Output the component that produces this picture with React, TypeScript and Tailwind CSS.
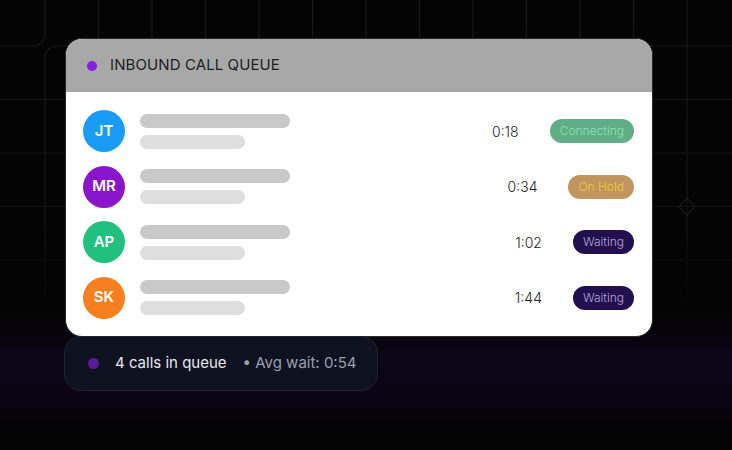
import React from 'react';

type Call = {
  initials: string;
  color: string;
  time: string;
  status: 'Connecting' | 'On Hold' | 'Waiting';
};

const calls: Call[] = [
  { initials: 'JT', color: 'bg-[#1a9bf5]', time: '0:18', status: 'Connecting' },
  { initials: 'MR', color: 'bg-[#8a16cc]', time: '0:34', status: 'On Hold' },
  { initials: 'AP', color: 'bg-[#22c07f]', time: '1:02', status: 'Waiting' },
  { initials: 'SK', color: 'bg-[#f77f1e]', time: '1:44', status: 'Waiting' },
];

const badgeStyles: Record<Call['status'], string> = {
  Connecting: 'bg-[#5fae86] text-[#93e2b6]',
  'On Hold': 'bg-[#c0955e] text-[#f6c93c]',
  Waiting: 'bg-[#22104e] text-[#b7a5df]',
};

function GridBackground() {
  const xs = Array.from({ length: 13 }, (_, i) => 98.5 + i * 53.5);
  const ys = [99.5, 153, 206.5, 260, 313.5];
  return (
    <svg className="absolute inset-0 h-full w-full" width="732" height="450" viewBox="0 0 732 450">
      <defs>
        <linearGradient id="fade" x1="0" y1="0" x2="0" y2="1">
          <stop offset="0" stopColor="#fff" stopOpacity="1" />
          <stop offset="0.5" stopColor="#fff" stopOpacity="0.8" />
          <stop offset="0.7" stopColor="#fff" stopOpacity="0" />
        </linearGradient>
        <mask id="gridMask">
          <rect width="732" height="450" fill="url(#fade)" />
        </mask>
        <linearGradient id="band" x1="0" y1="0" x2="0" y2="1">
          <stop offset="0" stopColor="#0b0416" stopOpacity="0" />
          <stop offset="0.35" stopColor="#0d0519" stopOpacity="1" />
          <stop offset="0.7" stopColor="#0a0413" stopOpacity="1" />
          <stop offset="1" stopColor="#050208" stopOpacity="0" />
        </linearGradient>
      </defs>
      <rect x="0" y="315" width="732" height="125" fill="url(#band)" />
      <g mask="url(#gridMask)" stroke="#191919" strokeWidth="1.2" fill="none">
        {xs.map((x) => (
          <line key={`v${x}`} x1={x} y1="0" x2={x} y2="450" />
        ))}
        {ys.map((y) => (
          <line key={`h${y}`} x1="0" y1={y} x2="732" y2={y} />
        ))}
        {/* rounded cell corners near top-left */}
        <path d="M45 0 V34 A12 12 0 0 1 33 46 H0" />
        <path d="M732 46 H57 A12 12 0 0 0 45 58 V450" />
        {/* little diamond at an intersection */}
        <path d="M687 198 L695 206.5 L687 215 L679 206.5 Z" stroke="#1e1e1e" />
      </g>
    </svg>
  );
}

export default function App() {
  return (
    <div
      className="relative h-[450px] w-[732px] overflow-hidden bg-[#040404]"
      style={{ fontFamily: 'Inter, "Noto Sans", sans-serif' }}
    >
      <GridBackground />
      <div className="relative flex flex-col pt-[38px] pl-[64px]">
        <div className="ml-[1px] w-[588px] overflow-hidden rounded-[17px] border-[1.5px] border-[#2a2a2a] bg-white">
          <div className="flex h-[53px] items-center gap-[13px] bg-[#a8a8a8] pl-[21px]">
            <span className="h-[10px] w-[10px] rounded-full bg-[#8a1ee0]" />
            <span className="text-[15px] tracking-[0.1px] text-[#1e1e1e]">INBOUND CALL QUEUE</span>
          </div>
          <div className="flex flex-col gap-[13.5px] pt-[18px] pr-[18px] pb-[17px] pl-[17px]">
            {calls.map((c) => (
              <div key={c.initials} className="flex h-[42px] items-center">
                <div
                  className={`flex h-[42px] w-[42px] shrink-0 items-center justify-center rounded-full ${c.color} text-[15px] font-semibold text-white`}
                >
                  {c.initials}
                </div>
                <div className="ml-[15px] flex flex-col gap-[7px]">
                  <div className="h-[14px] w-[150px] rounded-full bg-[#c9c9c9]" />
                  <div className="h-[14px] w-[105px] rounded-full bg-[#dedede]" />
                </div>
                <div className="ml-auto flex items-center gap-[31px]">
                  <span className="text-[14px] font-light text-[#222]">{c.time}</span>
                  <span
                    className={`flex h-[24px] items-center rounded-full px-[10px] text-[12px] font-light ${badgeStyles[c.status]}`}
                  >
                    {c.status}
                  </span>
                </div>
              </div>
            ))}
          </div>
        </div>
        <div className="-mt-[1px] flex h-[55px] w-[314px] items-center rounded-[17px] border border-[#22222e] bg-[#0e1120] pl-[23px]">
          <span className="h-[11px] w-[11px] rounded-full bg-[#5b1a9c]" />
          <span className="ml-[16px] text-[15px] text-[#e8e8f0]">4 calls in queue</span>
          <span className="ml-[16px] text-[15px] text-[#9aa0b0]">• Avg wait: 0:54</span>
        </div>
      </div>
    </div>
  );
}
